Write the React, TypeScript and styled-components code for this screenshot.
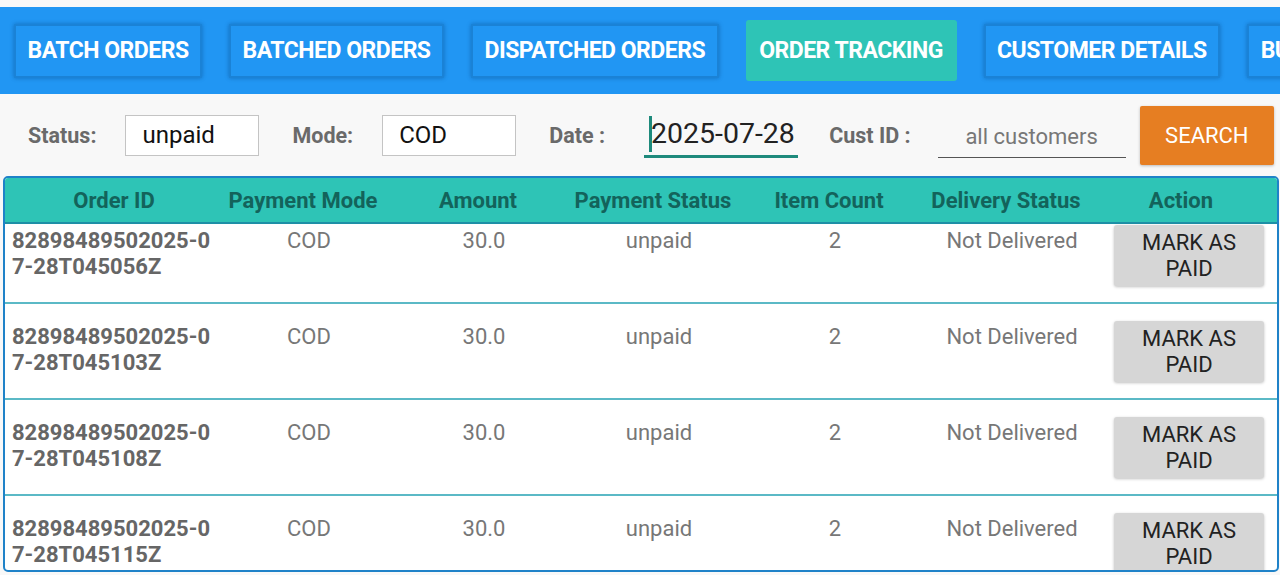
import styled, { createGlobalStyle, css } from 'styled-components'

const GlobalStyle = createGlobalStyle`
  html, body {
    margin: 0;
    padding: 0;
    background: #f8f8f8;
    font-family: Roboto, "Liberation Sans", Arial, sans-serif;
  }
  * {
    box-sizing: border-box;
  }
`

const tabs = [
  'BATCH ORDERS',
  'BATCHED ORDERS',
  'DISPATCHED ORDERS',
  'ORDER TRACKING',
  'CUSTOMER DETAILS',
  'BULK UPLOAD',
]

const orders = [
  { id: '82898489502025-07-28T045056Z' },
  { id: '82898489502025-07-28T045103Z' },
  { id: '82898489502025-07-28T045108Z' },
  { id: '82898489502025-07-28T045115Z' },
]

const columns = ['Order ID', 'Payment Mode', 'Amount', 'Payment Status', 'Item Count', 'Delivery Status', 'Action']

export default function App() {
  return (
    <Page>
      <GlobalStyle />

      <NavBar>
        {tabs.map(tab => (
          <NavButton key={tab} $active={tab === 'ORDER TRACKING'}>
            {tab}
          </NavButton>
        ))}
      </NavBar>

      <FilterBar>
        <Label>Status:</Label>
        <BoxInput defaultValue="unpaid" />
        <Label>Mode:</Label>
        <BoxInput defaultValue="COD" />
        <Label>Date :</Label>
        <DateField>
          <Caret />
          2025-07-28
        </DateField>
        <Label>Cust ID :</Label>
        <LineInput placeholder="all customers" />
        <SearchButton>SEARCH</SearchButton>
      </FilterBar>

      <TableBox>
        <Grid $head>
          {columns.map(col => (
            <HeadCell key={col}>{col}</HeadCell>
          ))}
        </Grid>

        {orders.map((order, i) => (
          <Grid key={order.id} $first={i === 0}>
            <IdCell>
              {order.id.slice(0, 16)}
              <br />
              {order.id.slice(16)}
            </IdCell>
            <Cell>COD</Cell>
            <Cell>30.0</Cell>
            <Cell>unpaid</Cell>
            <Cell>2</Cell>
            <Cell>Not Delivered</Cell>
            <ActionCell>
              <PayButton>MARK AS<br />PAID</PayButton>
            </ActionCell>
          </Grid>
        ))}
      </TableBox>
    </Page>
  )
}

const Page = styled.div`
  width: 1280px;
  height: 575px;
  overflow: hidden;
  padding-top: 7px;
`

const NavBar = styled.nav`
  display: flex;
  align-items: center;
  gap: 27px;
  height: 87px;
  padding: 0 14px;
  background: #2196f3;
  overflow: hidden;
  white-space: nowrap;
`

const NavButton = styled.button<{ $active?: boolean }>`
  flex-shrink: 0;
  height: 54px;
  padding: 0 11.5px;
  border: 2px solid #1a82d6;
  border-radius: 1px;
  background: #2196f3;
  box-shadow: 0 0 4px rgba(0, 60, 120, 0.45);
  color: #fff;
  font-family: Roboto, "Liberation Sans", sans-serif;
  font-size: 23px;
  font-weight: 700;
  letter-spacing: -0.5px;

  ${p => p.$active && css`
    height: 61px;
    border: none;
    border-radius: 3px;
    background: #2ec4b6;
    box-shadow: none;
    padding: 0 13.5px;
  `}
`

const FilterBar = styled.div`
  display: flex;
  align-items: center;
  height: 82px;
  padding: 0 6px 0 28px;
`

const Label = styled.span`
  margin-right: 29px;
  color: #6a6a6a;
  font-size: 21.5px;
  font-weight: 700;
  white-space: nowrap;
`

const BoxInput = styled.input`
  width: 134px;
  height: 41px;
  margin-right: 33px;
  padding: 0 16px;
  border: 1px solid #c4c4c4;
  background: #fff;
  color: #111;
  font-family: Roboto, "Liberation Sans", sans-serif;
  font-size: 24px;
  outline: none;
`

const DateField = styled.div`
  position: relative;
  width: 155px;
  height: 45px;
  margin: 0 31px 0 10px;
  padding: 3px 0 0 7px;
  border-bottom: 3px solid #1e8a7c;
  color: #222;
  font-size: 28.5px;
  line-height: 36px;
`

const Caret = styled.span`
  position: absolute;
  left: 5px;
  top: 3px;
  width: 3px;
  height: 36px;
  background: #1e8a7c;
`

const LineInput = styled.input`
  width: 188px;
  height: 42px;
  margin: 4px 14px 0 -2px;
  border: none;
  border-bottom: 1px solid #555;
  background: transparent;
  text-align: center;
  font-family: Roboto, "Liberation Sans", sans-serif;
  font-size: 22px;
  outline: none;

  &::placeholder {
    color: #777;
  }
`

const SearchButton = styled.button`
  width: 135px;
  height: 59px;
  border: none;
  border-radius: 2px;
  background: #e67e22;
  box-shadow: 0 1px 3px rgba(0, 0, 0, 0.25);
  color: #fff;
  font-family: Roboto, "Liberation Sans", sans-serif;
  font-size: 22px;
`

const TableBox = styled.div`
  height: 396px;
  margin: 0 1px 0 3px;
  border: 2px solid #1f82c8;
  border-radius: 5px;
  overflow: hidden;
  background: #fff;
`

const Grid = styled.div<{ $head?: boolean; $first?: boolean }>`
  display: grid;
  grid-template-columns: 218px 160px 190px 160px 192px 162px 188px;
  align-items: start;
  height: 96px;
  padding-top: 17px;
  border-bottom: 2px solid #5bb9c6;

  ${p => p.$first && css`
    height: 80px;
    padding-top: 1px;
  `}

  ${p => p.$head && css`
    height: 46px;
    padding-top: 0;
    align-items: center;
    background: #2ec4b6;
    border-bottom: 2px solid #1e8fa6;
  `}
`

const HeadCell = styled.div`
  text-align: center;
  color: #13635b;
  font-size: 22px;
  font-weight: 700;
  white-space: nowrap;
`

const Cell = styled.div`
  padding: 3px 0 0 12px;
  text-align: center;
  color: #777;
  font-size: 22px;
  line-height: 26px;
  white-space: nowrap;
`

const IdCell = styled(Cell)`
  padding-left: 7px;
  text-align: left;
  color: #666;
  font-weight: 700;
`

const ActionCell = styled.div`
  display: flex;
  padding-left: 27px;
`

const PayButton = styled.button`
  width: 150px;
  height: 61px;
  border: none;
  border-radius: 3px;
  background: #d6d6d6;
  box-shadow: 0 1px 3px rgba(0, 0, 0, 0.25);
  color: #222;
  font-family: Roboto, "Liberation Sans", sans-serif;
  font-size: 22px;
  line-height: 26px;
`
